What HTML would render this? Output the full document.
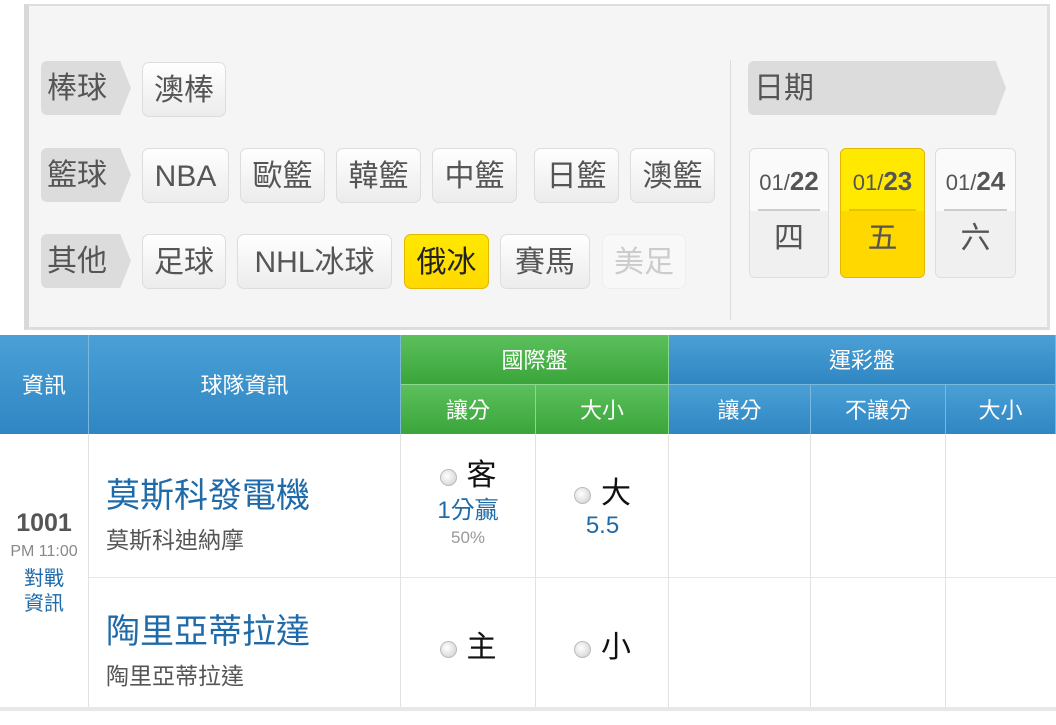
<!DOCTYPE html>
<html><head><meta charset="utf-8"><style>
*{margin:0;padding:0;box-sizing:border-box}
body{width:1056px;height:725px;background:#fff;position:relative;overflow:hidden;font-family:"Liberation Sans","Noto Sans CJK TC",sans-serif}
.a{position:absolute}
.panel{left:24px;top:4px;width:1026px;height:326px;background:#f5f5f5;border-left:5px solid #d8d8d8;border-top:2px solid #ddd;border-right:3px solid #e0e0e0;border-bottom:3px solid #ddd}
.lab{position:absolute;height:54px;background:#dcdcdc;color:#555;font-size:30px;line-height:56px;padding-left:6px;border-radius:6px 0 0 6px;clip-path:polygon(0 0,88% 0,100% 50%,88% 100%,0 100%)}
.btn{position:absolute;height:55px;background:linear-gradient(#fff,#f4f4f4 55%,#ececec);border:1px solid #ddd;border-radius:7px;color:#555;font-size:30px;line-height:56px;text-align:center}
.y{background:linear-gradient(#ffe900,#ffd800);border-color:#e0b800;color:#222}
.f{color:#ccc;background:#f8f8f8;border-color:#eee}
.card{position:absolute;top:148px;height:130px;border:1px solid #ddd;border-radius:6px;background:#fafafa;text-align:center;color:#555;overflow:hidden}
.card .d{font-size:22px;height:60px;line-height:64px}
.card .d b{font-size:26px}
.card hr{border:0;border-top:2px solid #ccc;margin:0 8px}
.card .w{font-size:30px;line-height:56px;background:#f0f0f0;height:66px}
.card.y{background:#ffe900;border-color:#e0b800}
.card.y .w{background:#ffd800}.card.y hr{border-color:#e6c200}
.th{position:absolute;color:#fff;font-size:22px;text-align:center;border-right:1px solid #7ab8de}
.blue{background:linear-gradient(#4aa0d6,#2f86c2)}
.green{background:linear-gradient(#5cc05c,#3aa53a);border-right-color:#8cd88c}
.vl{position:absolute;width:1px;background:#e2e2e2;top:434px;height:273px}
.radio{display:inline-block;width:17px;height:17px;border-radius:50%;background:radial-gradient(circle at 40% 40%,#fff,#ccc);border:1px solid #bbb;vertical-align:middle;margin-right:10px}
.opt{position:absolute;text-align:center;font-size:30px;color:#111}
.blu{color:#1f6aa8;font-size:24px}
</style></head><body>
<div class="a panel"></div>
<div class="lab" style="left:41px;top:61px;width:90px">棒球</div>
<div class="lab" style="left:41px;top:148px;width:90px">籃球</div>
<div class="lab" style="left:41px;top:234px;width:90px">其他</div>
<div class="btn" style="left:142px;top:62px;width:84px">澳棒</div>
<div class="btn" style="left:142px;top:148px;width:87px">NBA</div>
<div class="btn" style="left:240px;top:148px;width:85px">歐籃</div>
<div class="btn" style="left:336px;top:148px;width:85px">韓籃</div>
<div class="btn" style="left:432px;top:148px;width:85px">中籃</div>
<div class="btn" style="left:534px;top:148px;width:85px">日籃</div>
<div class="btn" style="left:630px;top:148px;width:85px">澳籃</div>
<div class="btn" style="left:142px;top:234px;width:84px">足球</div>
<div class="btn" style="left:237px;top:234px;width:155px">NHL冰球</div>
<div class="btn y" style="left:404px;top:234px;width:85px">俄冰</div>
<div class="btn" style="left:500px;top:234px;width:90px">賽馬</div>
<div class="btn f" style="left:602px;top:234px;width:84px">美足</div>
<div class="a" style="left:730px;top:60px;width:1px;height:260px;background:#ddd"></div>
<div class="lab" style="left:748px;top:61px;width:258px;clip-path:polygon(0 0,96% 0,100% 50%,96% 100%,0 100%)">日期</div>
<div class="card" style="left:749px;width:80px"><div class="d">01/<b>22</b></div><hr><div class="w">四</div></div>
<div class="card y" style="left:840px;width:85px"><div class="d">01/<b>23</b></div><hr><div class="w">五</div></div>
<div class="card" style="left:935px;width:81px"><div class="d">01/<b>24</b></div><hr><div class="w">六</div></div>

<div class="th blue" style="left:0;top:335px;width:89px;height:99px;line-height:102px">資訊</div>
<div class="th blue" style="left:89px;top:335px;width:312px;height:99px;line-height:102px">球隊資訊</div>
<div class="th green" style="left:401px;top:335px;width:268px;height:50px;line-height:52px;border-bottom:1px solid #8cd88c">國際盤</div>
<div class="th green" style="left:401px;top:385px;width:135px;height:49px;line-height:52px">讓分</div>
<div class="th green" style="left:536px;top:385px;width:133px;height:49px;line-height:52px">大小</div>
<div class="th blue" style="left:669px;top:335px;width:387px;height:50px;line-height:52px;border-bottom:1px solid #7ab8de">運彩盤</div>
<div class="th blue" style="left:669px;top:385px;width:142px;height:49px;line-height:52px">讓分</div>
<div class="th blue" style="left:811px;top:385px;width:135px;height:49px;line-height:52px">不讓分</div>
<div class="th blue" style="left:946px;top:385px;width:110px;height:49px;line-height:52px">大小</div>

<div class="vl" style="left:88px"></div><div class="vl" style="left:400px"></div><div class="vl" style="left:535px"></div><div class="vl" style="left:668px"></div><div class="vl" style="left:810px"></div><div class="vl" style="left:945px"></div>
<div class="a" style="left:89px;top:577px;width:967px;height:1px;background:#e6e6e6"></div>
<div class="a" style="left:0;top:707px;width:1056px;height:4px;background:#e8e8e8"></div>

<div class="a" style="left:0;top:507px;width:88px;text-align:center;color:#555">
<div style="font-size:25px;font-weight:bold;line-height:32px">1001</div>
<div style="font-size:16px;color:#888;line-height:26px">PM 11:00</div>
<div style="font-size:20px;color:#1f6aa8;line-height:25px;margin-top:2px">對戰<br>資訊</div></div>
<div class="a" style="left:106px;top:468px;font-size:34px;color:#1f6aa8">莫斯科發電機</div>
<div class="a" style="left:106px;top:521px;font-size:23px;color:#555">莫斯科迪納摩</div>
<div class="a" style="left:106px;top:604px;font-size:34px;color:#1f6aa8">陶里亞蒂拉達</div>
<div class="a" style="left:106px;top:657px;font-size:23px;color:#555">陶里亞蒂拉達</div>

<div class="opt" style="left:401px;top:450px;width:134px"><span class="radio"></span>客<div class="blu" style="line-height:34px">1分贏</div><div style="font-size:17px;color:#999">50%</div></div>
<div class="opt" style="left:536px;top:468px;width:133px"><span class="radio"></span>大<div class="blu" style="line-height:28px">5.5</div></div>
<div class="opt" style="left:401px;top:622px;width:134px"><span class="radio"></span>主</div>
<div class="opt" style="left:536px;top:622px;width:133px"><span class="radio"></span>小</div>
</body></html>
